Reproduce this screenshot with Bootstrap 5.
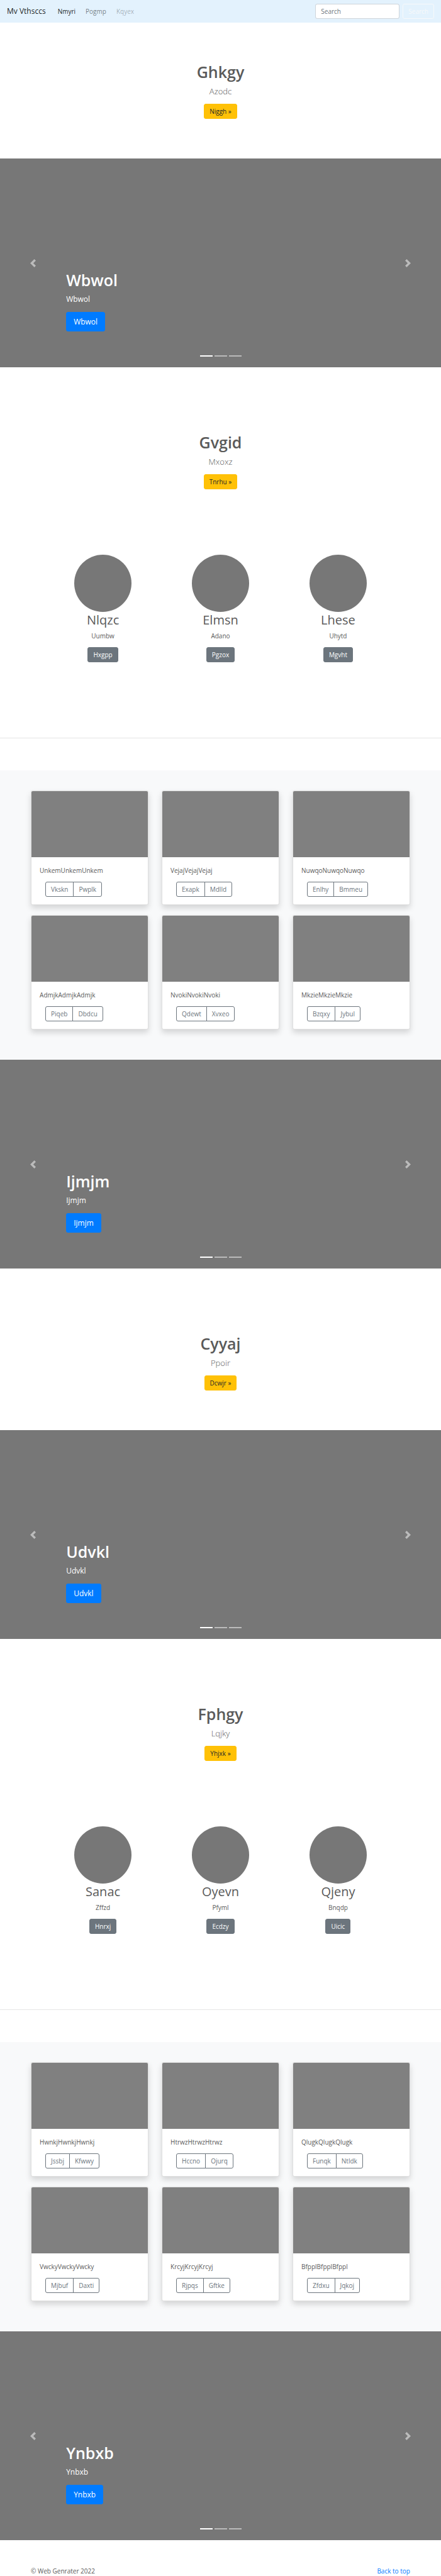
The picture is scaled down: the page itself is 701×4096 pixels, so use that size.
<!DOCTYPE html>
<html lang="en">
<head>
<meta charset="utf-8">
<meta name="viewport" content="width=device-width, initial-scale=1">
<title>Mv Vthsccs</title>
<link href="https://cdn.jsdelivr.net/npm/bootstrap@5.3.0/dist/css/bootstrap.min.css" rel="stylesheet">
<style>
  body { font-family: "Open Sans", "Noto Sans", sans-serif; font-size: 10px; line-height: 16px; color: #5a5a5a; }
  .btn { --bs-btn-font-size: 10px; --bs-btn-line-height: 14px; --bs-btn-padding-x: 8px; --bs-btn-padding-y: 4px; --bs-btn-border-radius: 3px; }
  .btn-lg { --bs-btn-font-size: 12px; --bs-btn-line-height: 19px; --bs-btn-padding-x: 11px; --bs-btn-padding-y: 5px; }
  .btn-primary { --bs-btn-bg: #007bff; --bs-btn-border-color: #007bff; }
  .btn-warning { --bs-btn-color: #212529; }

  .top-bar { background: #e3f2fd; padding: 6px 11px; }
  .top-bar .navbar-brand { font-size: 12px; line-height: 20px; padding: 2px 0; margin-right: 11px; color: rgba(0,0,0,.9); }
  .top-bar .nav-link { padding: 4px 5px; color: rgba(0,0,0,.5); }
  .top-bar .nav-link.active { color: rgba(0,0,0,.9); }
  .top-bar .nav-link.disabled { color: rgba(0,0,0,.3); }
  .top-bar .form-control { width: 134px; font-size: 10px; line-height: 14px; padding: 4px 8px; border-color: #ced4da; border-radius: 3px; margin-right: 5px; min-height: 0; }
  .top-bar .form-control::placeholder { color: #6c757d; }

  .intro { padding: 63px 10px; text-align: center; }
  .intro h1 { font-size: 25px; line-height: 31px; font-weight: 600; margin-bottom: 5px; }
  .intro .lead { font-size: 13px; line-height: 20px; font-weight: 300; margin-bottom: 10px; }

  .banner .carousel-item { background: #777; }
  .banner-body { height: 332px; padding: 0 15% 57px; color: #fff; }
  .banner-body h2 { font-size: 25px; line-height: 31px; font-weight: 600; margin-bottom: 5px; }
  .banner-body p { font-size: 12px; line-height: 20px; margin-bottom: 10px; }
  .banner .carousel-indicators { margin-bottom: 17px; gap: 3px; }
  .banner .carousel-indicators [data-bs-target] { width: 20px; height: 2px; margin: 0; border: 0; }
  .banner svg { width: 13px; height: 13px; fill: #fff; }
  .spaced { margin-bottom: 41px; }

  .people { padding: 41px 10% 120px; text-align: center; }
  .avatar { width: 91px; height: 91px; border-radius: 50%; background: #777; margin: 0 auto; }
  .people h2 { font-size: 20px; line-height: 26px; font-weight: 400; margin-bottom: 4px; }
  .people p { margin-bottom: 10px; }
  .rule { margin: 0 0 51px; border-top: 1px solid rgba(0,0,0,.1); opacity: 1; }

  .album { background: #f8f9fa; padding: 32px 7% 48px; }
  .album-grid { grid-template-columns: repeat(3, 1fr); gap: 16px 21px; }
  .album .card { border-color: rgba(0,0,0,.125); border-radius: 3px; box-shadow: 0 5px 10px rgba(0,0,0,.15); --bs-card-inner-border-radius: 2px; color: #5a5a5a; }
  .album .card-img-top { height: 105px; background: #808080; }
  .album .card-body { padding: 13px 13px 12px; }
  .album .card-text { margin-bottom: 10px; }
  .album .btn-group { margin-left: 9px; }

  .page-end { padding: 42px 7% 0; line-height: 15px; }
  .page-end a { color: #007bff; text-decoration: none; }
</style>
</head>
<body>
<header>
  <nav class="navbar navbar-expand top-bar">
    <a class="navbar-brand" href="#">Mv Vthsccs</a>
    <ul class="navbar-nav me-auto">
      <li class="nav-item"><a class="nav-link active" href="#">Nmyri</a></li>
      <li class="nav-item"><a class="nav-link" href="#">Pogmp</a></li>
      <li class="nav-item"><a class="nav-link disabled" href="#" aria-disabled="true">Kqyex</a></li>
    </ul>
    <form class="d-flex">
      <input class="form-control" type="search" placeholder="Search" aria-label="Search">
      <button class="btn btn-outline-light" type="submit">Search</button>
    </form>
  </nav>
</header>

<main>
  <section class="intro">
    <h1>Ghkgy</h1>
    <p class="lead">Azodc</p>
    <a class="btn btn-warning" href="#">Niggh »</a>
  </section>

  <section id="banner1" class="carousel slide banner spaced">
    <div class="carousel-indicators">
      <button type="button" data-bs-target="#banner1" data-bs-slide-to="0" class="active" aria-current="true" aria-label="Slide 1"></button>
      <button type="button" data-bs-target="#banner1" data-bs-slide-to="1" aria-label="Slide 2"></button>
      <button type="button" data-bs-target="#banner1" data-bs-slide-to="2" aria-label="Slide 3"></button>
    </div>
    <div class="carousel-inner">
      <div class="carousel-item active">
        <div class="banner-body d-flex flex-column justify-content-end align-items-start">
          <h2>Wbwol</h2>
          <p>Wbwol</p>
          <a class="btn btn-lg btn-primary" href="#">Wbwol</a>
        </div>
      </div>
      <div class="carousel-item"><div class="banner-body"></div></div>
      <div class="carousel-item"><div class="banner-body"></div></div>
    </div>
    <button class="carousel-control-prev" type="button" data-bs-target="#banner1" data-bs-slide="prev" aria-label="Previous"><svg viewBox="0 0 8 8"><path d="M5.25 0l-4 4 4 4 1.5-1.5L4.25 4l2.5-2.5L5.25 0z"/></svg></button>
    <button class="carousel-control-next" type="button" data-bs-target="#banner1" data-bs-slide="next" aria-label="Next"><svg viewBox="0 0 8 8"><path d="M2.75 0l-1.5 1.5L3.75 4l-2.5 2.5L2.75 8l4-4-4-4z"/></svg></button>
  </section>

  <section class="intro">
    <h1>Gvgid</h1>
    <p class="lead">Mxoxz</p>
    <a class="btn btn-warning" href="#">Tnrhu »</a>
  </section>

  <section class="people">
    <div class="row g-0">
      <div class="col-4"><div class="avatar"></div><h2>Nlqzc</h2><p>Uumbw</p><a class="btn btn-secondary" href="#">Hxgpp</a></div>
      <div class="col-4"><div class="avatar"></div><h2>Elmsn</h2><p>Adano</p><a class="btn btn-secondary" href="#">Pgzox</a></div>
      <div class="col-4"><div class="avatar"></div><h2>Lhese</h2><p>Uhytd</p><a class="btn btn-secondary" href="#">Mgvht</a></div>
    </div>
  </section>
  <hr class="rule">

  <section class="album">
    <div class="album-grid d-grid">
      <div class="card"><div class="card-img-top"></div><div class="card-body"><p class="card-text">UnkemUnkemUnkem</p><div class="btn-group"><button type="button" class="btn btn-outline-secondary">Vkskn</button><button type="button" class="btn btn-outline-secondary">Pwplk</button></div></div></div>
      <div class="card"><div class="card-img-top"></div><div class="card-body"><p class="card-text">VejajVejajVejaj</p><div class="btn-group"><button type="button" class="btn btn-outline-secondary">Exapk</button><button type="button" class="btn btn-outline-secondary">Mdlld</button></div></div></div>
      <div class="card"><div class="card-img-top"></div><div class="card-body"><p class="card-text">NuwqoNuwqoNuwqo</p><div class="btn-group"><button type="button" class="btn btn-outline-secondary">Enlhy</button><button type="button" class="btn btn-outline-secondary">Bmmeu</button></div></div></div>
      <div class="card"><div class="card-img-top"></div><div class="card-body"><p class="card-text">AdmjkAdmjkAdmjk</p><div class="btn-group"><button type="button" class="btn btn-outline-secondary">Piqeb</button><button type="button" class="btn btn-outline-secondary">Dbdcu</button></div></div></div>
      <div class="card"><div class="card-img-top"></div><div class="card-body"><p class="card-text">NvokiNvokiNvoki</p><div class="btn-group"><button type="button" class="btn btn-outline-secondary">Qdewt</button><button type="button" class="btn btn-outline-secondary">Xvxeo</button></div></div></div>
      <div class="card"><div class="card-img-top"></div><div class="card-body"><p class="card-text">MkzieMkzieMkzie</p><div class="btn-group"><button type="button" class="btn btn-outline-secondary">Bzqxy</button><button type="button" class="btn btn-outline-secondary">Jybul</button></div></div></div>
    </div>
  </section>

  <section id="banner2" class="carousel slide banner spaced">
    <div class="carousel-indicators">
      <button type="button" data-bs-target="#banner2" data-bs-slide-to="0" class="active" aria-current="true" aria-label="Slide 1"></button>
      <button type="button" data-bs-target="#banner2" data-bs-slide-to="1" aria-label="Slide 2"></button>
      <button type="button" data-bs-target="#banner2" data-bs-slide-to="2" aria-label="Slide 3"></button>
    </div>
    <div class="carousel-inner">
      <div class="carousel-item active">
        <div class="banner-body d-flex flex-column justify-content-end align-items-start">
          <h2>Ijmjm</h2>
          <p>Ijmjm</p>
          <a class="btn btn-lg btn-primary" href="#">Ijmjm</a>
        </div>
      </div>
      <div class="carousel-item"><div class="banner-body"></div></div>
      <div class="carousel-item"><div class="banner-body"></div></div>
    </div>
    <button class="carousel-control-prev" type="button" data-bs-target="#banner2" data-bs-slide="prev" aria-label="Previous"><svg viewBox="0 0 8 8"><path d="M5.25 0l-4 4 4 4 1.5-1.5L4.25 4l2.5-2.5L5.25 0z"/></svg></button>
    <button class="carousel-control-next" type="button" data-bs-target="#banner2" data-bs-slide="next" aria-label="Next"><svg viewBox="0 0 8 8"><path d="M2.75 0l-1.5 1.5L3.75 4l-2.5 2.5L2.75 8l4-4-4-4z"/></svg></button>
  </section>

  <section class="intro">
    <h1>Cyyaj</h1>
    <p class="lead">Ppoir</p>
    <a class="btn btn-warning" href="#">Dcwjr »</a>
  </section>

  <section id="banner3" class="carousel slide banner spaced">
    <div class="carousel-indicators">
      <button type="button" data-bs-target="#banner3" data-bs-slide-to="0" class="active" aria-current="true" aria-label="Slide 1"></button>
      <button type="button" data-bs-target="#banner3" data-bs-slide-to="1" aria-label="Slide 2"></button>
      <button type="button" data-bs-target="#banner3" data-bs-slide-to="2" aria-label="Slide 3"></button>
    </div>
    <div class="carousel-inner">
      <div class="carousel-item active">
        <div class="banner-body d-flex flex-column justify-content-end align-items-start">
          <h2>Udvkl</h2>
          <p>Udvkl</p>
          <a class="btn btn-lg btn-primary" href="#">Udvkl</a>
        </div>
      </div>
      <div class="carousel-item"><div class="banner-body"></div></div>
      <div class="carousel-item"><div class="banner-body"></div></div>
    </div>
    <button class="carousel-control-prev" type="button" data-bs-target="#banner3" data-bs-slide="prev" aria-label="Previous"><svg viewBox="0 0 8 8"><path d="M5.25 0l-4 4 4 4 1.5-1.5L4.25 4l2.5-2.5L5.25 0z"/></svg></button>
    <button class="carousel-control-next" type="button" data-bs-target="#banner3" data-bs-slide="next" aria-label="Next"><svg viewBox="0 0 8 8"><path d="M2.75 0l-1.5 1.5L3.75 4l-2.5 2.5L2.75 8l4-4-4-4z"/></svg></button>
  </section>

  <section class="intro">
    <h1>Fphgy</h1>
    <p class="lead">Lqjky</p>
    <a class="btn btn-warning" href="#">Yhjxk »</a>
  </section>

  <section class="people">
    <div class="row g-0">
      <div class="col-4"><div class="avatar"></div><h2>Sanac</h2><p>Zffzd</p><a class="btn btn-secondary" href="#">Hnrxj</a></div>
      <div class="col-4"><div class="avatar"></div><h2>Oyevn</h2><p>Pfyml</p><a class="btn btn-secondary" href="#">Ecdzy</a></div>
      <div class="col-4"><div class="avatar"></div><h2>Qjeny</h2><p>Bnqdp</p><a class="btn btn-secondary" href="#">Uicic</a></div>
    </div>
  </section>
  <hr class="rule">

  <section class="album">
    <div class="album-grid d-grid">
      <div class="card"><div class="card-img-top"></div><div class="card-body"><p class="card-text">HwnkjHwnkjHwnkj</p><div class="btn-group"><button type="button" class="btn btn-outline-secondary">Jssbj</button><button type="button" class="btn btn-outline-secondary">Kfwwy</button></div></div></div>
      <div class="card"><div class="card-img-top"></div><div class="card-body"><p class="card-text">HtrwzHtrwzHtrwz</p><div class="btn-group"><button type="button" class="btn btn-outline-secondary">Hccno</button><button type="button" class="btn btn-outline-secondary">Ojurq</button></div></div></div>
      <div class="card"><div class="card-img-top"></div><div class="card-body"><p class="card-text">QlugkQlugkQlugk</p><div class="btn-group"><button type="button" class="btn btn-outline-secondary">Funqk</button><button type="button" class="btn btn-outline-secondary">Ntldk</button></div></div></div>
      <div class="card"><div class="card-img-top"></div><div class="card-body"><p class="card-text">VwckyVwckyVwcky</p><div class="btn-group"><button type="button" class="btn btn-outline-secondary">Mjbuf</button><button type="button" class="btn btn-outline-secondary">Daxti</button></div></div></div>
      <div class="card"><div class="card-img-top"></div><div class="card-body"><p class="card-text">KrcyjKrcyjKrcyj</p><div class="btn-group"><button type="button" class="btn btn-outline-secondary">Rjpqs</button><button type="button" class="btn btn-outline-secondary">Gftke</button></div></div></div>
      <div class="card"><div class="card-img-top"></div><div class="card-body"><p class="card-text">BfpplBfpplBfppl</p><div class="btn-group"><button type="button" class="btn btn-outline-secondary">Zfdxu</button><button type="button" class="btn btn-outline-secondary">Jqkoj</button></div></div></div>
    </div>
  </section>

  <section id="banner4" class="carousel slide banner">
    <div class="carousel-indicators">
      <button type="button" data-bs-target="#banner4" data-bs-slide-to="0" class="active" aria-current="true" aria-label="Slide 1"></button>
      <button type="button" data-bs-target="#banner4" data-bs-slide-to="1" aria-label="Slide 2"></button>
      <button type="button" data-bs-target="#banner4" data-bs-slide-to="2" aria-label="Slide 3"></button>
    </div>
    <div class="carousel-inner">
      <div class="carousel-item active">
        <div class="banner-body d-flex flex-column justify-content-end align-items-start">
          <h2>Ynbxb</h2>
          <p>Ynbxb</p>
          <a class="btn btn-lg btn-primary" href="#">Ynbxb</a>
        </div>
      </div>
      <div class="carousel-item"><div class="banner-body"></div></div>
      <div class="carousel-item"><div class="banner-body"></div></div>
    </div>
    <button class="carousel-control-prev" type="button" data-bs-target="#banner4" data-bs-slide="prev" aria-label="Previous"><svg viewBox="0 0 8 8"><path d="M5.25 0l-4 4 4 4 1.5-1.5L4.25 4l2.5-2.5L5.25 0z"/></svg></button>
    <button class="carousel-control-next" type="button" data-bs-target="#banner4" data-bs-slide="next" aria-label="Next"><svg viewBox="0 0 8 8"><path d="M2.75 0l-1.5 1.5L3.75 4l-2.5 2.5L2.75 8l4-4-4-4z"/></svg></button>
  </section>
</main>

<footer class="page-end d-flex justify-content-between">
  <span>© Web Genrater 2022</span>
  <a href="#">Back to top</a>
</footer>
<script src="https://cdn.jsdelivr.net/npm/bootstrap@5.3.0/dist/js/bootstrap.bundle.min.js"></script>
</body>
</html>
